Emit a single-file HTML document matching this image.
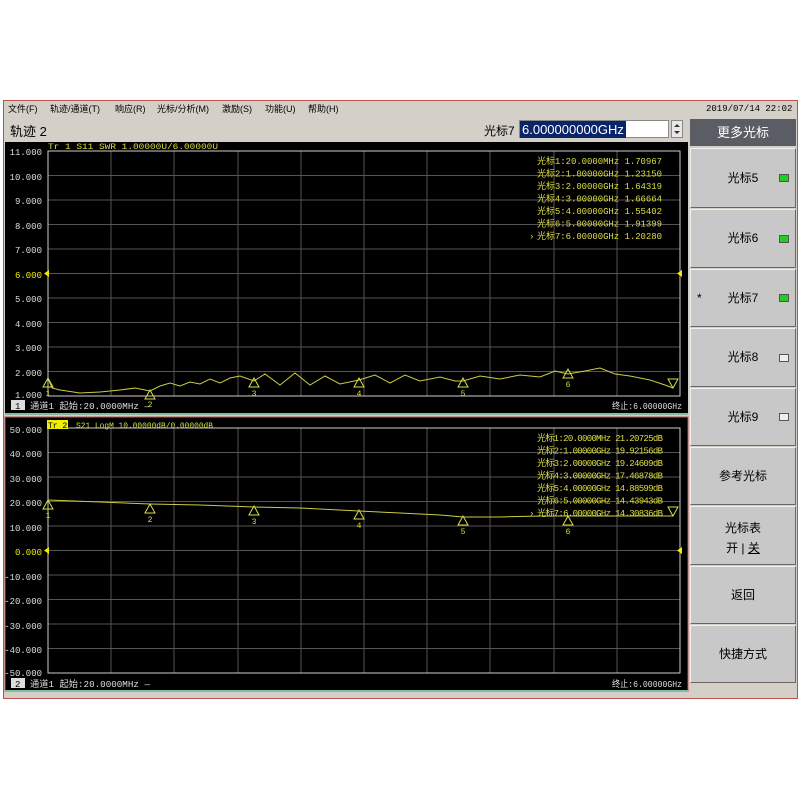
<!DOCTYPE html>
<html><head><meta charset="utf-8"><style>
*{margin:0;padding:0;box-sizing:border-box}
body{width:800px;height:800px;background:#fff;position:relative;font-family:"Liberation Sans","Noto Sans CJK SC",sans-serif;overflow:hidden}
.win{position:absolute;left:3px;top:100px;width:795px;height:599px;background:#d4d0c8;border:1px solid #c05050}
.menu span{position:absolute;top:102px;font-size:9px;color:#000;white-space:pre}
.date{position:absolute;left:706px;top:104px;font-size:9px;font-family:"Liberation Mono",monospace}
.title{position:absolute;left:10px;top:121px;font-size:13px}
.mk{position:absolute;left:484px;top:122px;font-size:12px}
.inp{position:absolute;left:519px;top:120px;width:150px;height:18px;background:#fff;border:1px solid #888}
.inp span{background:#0a246a;color:#fff;font-size:13px;padding:0 2px;line-height:17px;display:inline-block}
.spin{position:absolute;left:671px;top:120px;width:12px;height:18px;background:#e8e8e8;border:1px solid #888}
.btn{position:absolute;left:690px;width:106px;background:#c8c8c8;border:1px solid #f0f0f0;border-right-color:#666;border-bottom-color:#666;font-size:12px;color:#000;text-align:center}
.led{position:absolute;right:6px;top:50%;margin-top:-4px;width:10px;height:8px;background:#2c2;border:1px solid #555}
.ledo{background:#eee}
.hd{position:absolute;left:690px;top:119px;width:106px;height:27px;background:#5a5e64;color:#fff;font-size:13px;text-align:center;line-height:27px}
</style></head><body>
<div class="win"></div>
<div class="menu"><span style="left:8px">文件(F)</span><span style="left:50px">轨迹/通道(T)</span><span style="left:115px">响应(R)</span><span style="left:157px">光标/分析(M)</span><span style="left:222px">激励(S)</span><span style="left:265px">功能(U)</span><span style="left:308px">帮助(H)</span></div>
<div class="date">2019/07/14 22:02</div>
<div class="title">轨迹 2</div>
<div class="mk">光标7</div>
<div class="inp"><span>6.000000000GHz</span></div>
<div class="spin"><svg width="10" height="16"><path d="M2 6l3-3l3 3zM2 10l3 3l3-3z" fill="#333"/></svg></div>
<div class="hd">更多光标</div>
<div class="btn" style="top:148px;height:60px;line-height:58px">光标5<div class="led"></div></div>
<div class="btn" style="top:209px;height:59px;line-height:57px">光标6<div class="led"></div></div>
<div class="btn" style="top:269px;height:58px;line-height:56px"><span style="position:absolute;left:6px">*</span>光标7<div class="led"></div></div>
<div class="btn" style="top:328px;height:59px;line-height:57px">光标8<div class="led ledo"></div></div>
<div class="btn" style="top:388px;height:58px;line-height:56px">光标9<div class="led ledo"></div></div>
<div class="btn" style="top:447px;height:58px;line-height:56px">参考光标</div>
<div class="btn" style="top:506px;height:59px;padding-top:11px;line-height:20px">光标表<br>开 | <u>关</u></div>
<div class="btn" style="top:566px;height:58px;line-height:56px">返回</div>
<div class="btn" style="top:625px;height:58px;line-height:56px">快捷方式</div>

<svg style="position:absolute;left:0;top:0" width="800" height="800" font-family="Liberation Mono,Noto Sans CJK SC,monospace">
<rect x="5" y="142" width="683" height="271" fill="#000"/>
<rect x="5" y="413" width="683" height="2" fill="#7fbf9f"/>
<rect x="5" y="417" width="683" height="274" fill="#000" stroke="#c05050"/>
<rect x="5" y="690" width="683" height="2" fill="#7fbf9f"/>
<g stroke="#555" stroke-width="1">
<path d="M48 175.5H680M48 200H680M48 224.5H680M48 249H680M48 273.5H680M48 298H680M48 322.5H680M48 347H680M48 371.5H680M111 151V396M174 151V396M238 151V396M301 151V396M364 151V396M427 151V396M490 151V396M554 151V396M617 151V396"/>
<path d="M48 452.5H680M48 477H680M48 501.5H680M48 526H680M48 550.5H680M48 575H680M48 599.5H680M48 624H680M48 648.5H680M111 428V673M174 428V673M238 428V673M301 428V673M364 428V673M427 428V673M490 428V673M554 428V673M617 428V673"/>
</g>
<rect x="48" y="151" width="632" height="245" fill="none" stroke="#ccc"/>
<rect x="48" y="428" width="632" height="245" fill="none" stroke="#ccc"/>
<g font-size="9" fill="#ddd" text-anchor="end">
<text x="42" y="155">11.000</text><text x="42" y="180">10.000</text><text x="42" y="204">9.000</text><text x="42" y="229">8.000</text><text x="42" y="253">7.000</text><text x="42" y="278" fill="#ee0">6.000</text><text x="42" y="302">5.000</text><text x="42" y="327">4.000</text><text x="42" y="351">3.000</text><text x="42" y="376">2.000</text><text x="42" y="398">1.000</text>
<text x="42" y="433">50.000</text><text x="42" y="457">40.000</text><text x="42" y="482">30.000</text><text x="42" y="506">20.000</text><text x="42" y="531">10.000</text><text x="42" y="555" fill="#ee0">0.000</text><text x="42" y="580">-10.000</text><text x="42" y="604">-20.000</text><text x="42" y="629">-30.000</text><text x="42" y="653">-40.000</text><text x="42" y="676">-50.000</text>
</g>
<path d="M49 270l-5 3.5l5 3.5zM682 270l-5 3.5l5 3.5z" fill="#ee0"/>
<path d="M49 547l-5 3.5l5 3.5zM682 547l-5 3.5l5 3.5z" fill="#ee0"/>
<g font-size="8" fill="#dd4">
<text x="48" y="149" textLength="170" lengthAdjust="spacingAndGlyphs">Tr 1  S11 SWR 1.00000U/6.00000U</text>
<rect x="47" y="420" width="21" height="9" fill="#ee0"/><text x="48" y="428" fill="#000">Tr 2</text>
<text x="76" y="428" textLength="137" lengthAdjust="spacingAndGlyphs">S21 LogM 10.00000dB/0.00000dB</text>
</g>
<g font-size="9" fill="#dd4" lengthAdjust="spacingAndGlyphs">
<text x="537" y="164" textLength="125">光标1:20.0000MHz 1.70967</text>
<text x="537" y="176.5" textLength="125">光标2:1.00000GHz 1.23150</text>
<text x="537" y="189" textLength="125">光标3:2.00000GHz 1.64319</text>
<text x="537" y="201.5" textLength="125">光标4:3.00000GHz 1.66664</text>
<text x="537" y="214" textLength="125">光标5:4.00000GHz 1.55402</text>
<text x="537" y="226.5" textLength="125">光标6:5.00000GHz 1.91399</text>
<text x="529" y="239">›</text><text x="537" y="239" textLength="125">光标7:6.00000GHz 1.20280</text>
<text x="537" y="441" textLength="126">光标1:20.0000MHz 21.20725dB</text>
<text x="537" y="453.5" textLength="126">光标2:1.00000GHz 19.92156dB</text>
<text x="537" y="466" textLength="126">光标3:2.00000GHz 19.24609dB</text>
<text x="537" y="478.5" textLength="126">光标4:3.00000GHz 17.46878dB</text>
<text x="537" y="491" textLength="126">光标5:4.00000GHz 14.88599dB</text>
<text x="537" y="503.5" textLength="126">光标6:5.00000GHz 14.43943dB</text>
<text x="529" y="516">›</text><text x="537" y="516" textLength="126">光标7:6.00000GHz 14.30836dB</text>
</g>
<path fill="none" stroke="#cc4" stroke-width="1" d="M48 378L52 388L60 390L80 393L100 392L120 390L135 388L150 391L160 386L170 383L180 386L190 382L200 384L210 379L220 383L230 378L240 376L254 381L265 374L280 385L295 373L310 385L325 376L340 384L359 380L375 375L390 383L405 375L420 381L440 377L455 381L463 381L480 376L500 379L520 375L540 377L555 371L568 374L585 371L600 368L615 374L630 376L650 380L665 385L673 388"/>
<path fill="none" stroke="#cc4" stroke-width="1" d="M48 500L100 502L150 504L200 505L254 507L300 508L359 511L400 513L440 515L463 517L500 517L540 516L568 516L620 516L673 516"/>
<g fill="none" stroke="#dd4" stroke-width="1">
<path d="M48 378l-5 9h10z M150 390l-5 9h10z M254 378l-5 9h10z M359 378l-5 9h10z M463 378l-5 9h10z M568 369l-5 9h10z M673 388l-5-9h10z"/>
<path d="M48 500l-5 9h10z M150 504l-5 9h10z M254 506l-5 9h10z M359 510l-5 9h10z M463 516l-5 9h10z M568 516l-5 9h10z M673 516l-5-9h10z"/>
</g>
<g font-size="8" fill="#dd4" text-anchor="middle">
<text x="48" y="396">1</text><text x="150" y="407">2</text><text x="254" y="396">3</text><text x="359" y="396">4</text><text x="463" y="396">5</text><text x="568" y="387">6</text>
<text x="48" y="518">1</text><text x="150" y="522">2</text><text x="254" y="524">3</text><text x="359" y="528">4</text><text x="463" y="534">5</text><text x="568" y="534">6</text>
</g>
<g font-size="9" fill="#ddd">
<rect x="11" y="400" width="14" height="10" fill="#ddd"/><text x="15" y="409" fill="#000">1</text>
<text x="30" y="409" textLength="120" lengthAdjust="spacingAndGlyphs">通道1  起始:20.0000MHz —</text>
<text x="612" y="409" textLength="70" lengthAdjust="spacingAndGlyphs">终止:6.00000GHz</text>
<rect x="11" y="678" width="14" height="10" fill="#ddd"/><text x="15" y="687" fill="#000">2</text>
<text x="30" y="687" textLength="120" lengthAdjust="spacingAndGlyphs">通道1  起始:20.0000MHz —</text>
<text x="612" y="687" textLength="70" lengthAdjust="spacingAndGlyphs">终止:6.00000GHz</text>
</g>
</svg>
</body></html>
